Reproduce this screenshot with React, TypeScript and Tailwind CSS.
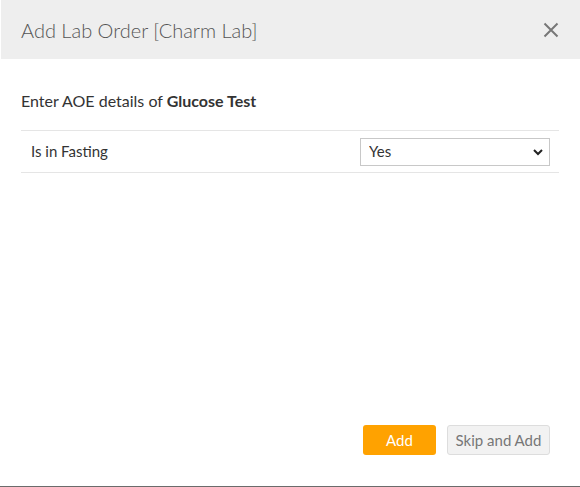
import { useState } from "react";

export default function App() {
  const [fasting, setFasting] = useState("Yes");

  return (
    <div className="h-[487px] w-[580px] overflow-hidden bg-white font-['Lato','Noto_Sans',sans-serif]">
      <div className="flex h-[486px] flex-col">
        {/* header */}
        <div className="ml-px flex h-[59px] shrink-0 items-center justify-between bg-[#eeeeee] pl-5 pr-[21px]">
          <h1 className="text-[20px] font-light text-[#555555]">Add Lab Order [Charm Lab]</h1>
          <button className="text-[#777777]">
            <svg width="16" height="16" viewBox="0 0 16 16" fill="none" stroke="currentColor" strokeWidth="2">
              <path d="M1.5 1.5 L14.5 14.5 M14.5 1.5 L1.5 14.5" />
            </svg>
          </button>
        </div>

        {/* body */}
        <div className="flex flex-1 flex-col px-[21px] pt-[31px]">
          <p className="text-[16px] leading-[22px] text-[#333333]">
            Enter AOE details of <span className="font-bold">Glucose Test</span>
          </p>
          <table className="mt-[18px] w-full border-collapse">
            <tbody>
              <tr className="border-y border-[#e5e5e5]">
                <td className="h-[42px] pl-[10px] text-[15px] text-[#333333]">Is in Fasting</td>
                <td className="w-[199px] pr-[9px]">
                  <div className="relative">
                    <select
                      value={fasting}
                      onChange={(e) => setFasting(e.target.value)}
                      className="h-[28px] w-full appearance-none border border-[#c8c8c8] bg-white pl-[8px] text-[15px] text-[#333333] outline-none"
                    >
                      <option>Yes</option>
                      <option>No</option>
                    </select>
                    <svg
                      className="pointer-events-none absolute right-[7px] top-[11px]"
                      width="10"
                      height="7"
                      viewBox="0 0 10 7"
                      fill="none"
                      stroke="#222"
                      strokeWidth="2"
                    >
                      <path d="M1 1 L5 5 L9 1" />
                    </svg>
                  </div>
                </td>
              </tr>
            </tbody>
          </table>

          <div className="mt-auto mb-[31px] flex justify-end gap-[11px] pr-[9px]">
            <button className="h-[30px] w-[73px] rounded-[3px] bg-[#ffa200] text-[15px] text-white">Add</button>
            <button className="h-[30px] w-[103px] rounded-[3px] border border-[#dddddd] bg-[#f2f2f2] text-[15px] text-[#777777]">
              Skip and Add
            </button>
          </div>
        </div>
      </div>
      <div className="h-px bg-[#6b6b6b]" />
    </div>
  );
}
